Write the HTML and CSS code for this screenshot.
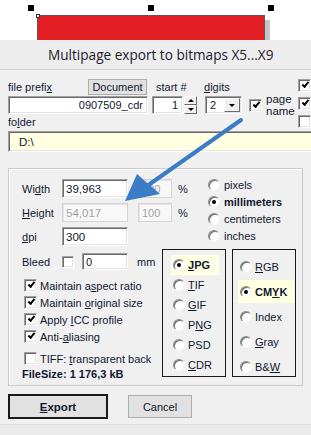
FILE: index.html
```html
<!DOCTYPE html>
<html lang="en">
<head>
  <meta charset="UTF-8" />
  <meta name="viewport" content="width=device-width, initial-scale=1.0"/>
  <title>Multipage export to bitmaps</title>
  <link rel="stylesheet" href="styles.css">
</head>
<body>
  <!-- drawing canvas behind the dialog -->
  <div class="canvas">
    <span class="handle h-left"></span>
    <span class="handle h-mid"></span>
    <span class="handle h-right"></span>
    <div class="shape"><span class="node"></span></div>
  </div>

  <div class="titlebar">Multipage export to bitmaps X5...X9</div>

  <div class="dialog">
    <div class="top">
      <div class="top-main">
        <div class="row labels">
          <span class="lbl-prefix">file prefi<u>x</u></span>
          <span class="btn btn-doc">Document</span>
          <span class="lbl-start">start #</span>
          <span><u>d</u>igits</span>
        </div>
        <div class="row inputs">
          <div class="field prefix">0907509_cdr</div>
          <div class="spin">
            <div class="field spin-val">1</div>
            <div class="spin-btns">
              <span class="arrow-btn"><i class="tri up"></i></span>
              <span class="arrow-btn"><i class="tri down"></i></span>
            </div>
          </div>
          <div class="field select">
            <span>2</span>
            <span class="arrow-btn drop"><i class="tri down"></i></span>
          </div>
          <div class="page-check">
            <span class="box checked"></span>
            <span class="page-lbl">page<br>name</span>
          </div>
        </div>
        <div class="lbl-folder">fo<u>l</u>der</div>
      </div>
      <div class="side-checks">
        <span class="box checked"></span>
        <span class="box checked"></span>
        <span class="box"></span>
      </div>
    </div>

    <div class="field folder">D:\</div>

    <div class="group">
      <div class="upper">
        <div class="sizes">
          <div class="size-row">
            <span class="lbl">Wi<u>d</u>th</span>
            <div class="field size">39,963</div>
            <div class="field pct disabled">100</div>
            <span class="pct-sign">%</span>
          </div>
          <div class="size-row">
            <span class="lbl"><u>H</u>eight</span>
            <div class="field size disabled">54,017</div>
            <div class="field pct disabled">100</div>
            <span class="pct-sign">%</span>
          </div>
          <div class="size-row">
            <span class="lbl"><u>d</u>pi</span>
            <div class="field size">300</div>
          </div>
        </div>
        <div class="units">
          <div class="opt"><span class="radio"></span><span>pixels</span></div>
          <div class="opt bold"><span class="radio on"></span><span>millimeters</span></div>
          <div class="opt"><span class="radio"></span><span>centimeters</span></div>
          <div class="opt"><span class="radio"></span><span>inches</span></div>
        </div>
      </div>

      <div class="lower">
        <div class="options">
          <div class="bleed-row">
            <span class="lbl">Bleed</span>
            <span class="box small"></span>
            <div class="field bleed">0</div>
            <span class="mm">mm</span>
          </div>
          <div class="checks">
            <div class="check"><span class="box checked"></span><span>Maintain a<u>s</u>pect ratio</span></div>
            <div class="check"><span class="box checked"></span><span>Maintain <u>o</u>riginal size</span></div>
            <div class="check"><span class="box checked"></span><span>Apply <u>I</u>CC profile</span></div>
            <div class="check"><span class="box checked"></span><span>Anti-<u>a</u>liasing</span></div>
            <div class="check tiff"><span class="box"></span><span>TIFF: <u>t</u>ransparent back</span></div>
          </div>
          <div class="filesize">FileSize: 1 176,3 kB</div>
        </div>

        <div class="pick formats">
          <div class="opt sel bold"><span class="radio on"></span><span><u>J</u>PG</span></div>
          <div class="opt"><span class="radio"></span><span><u>T</u>IF</span></div>
          <div class="opt"><span class="radio"></span><span><u>G</u>IF</span></div>
          <div class="opt"><span class="radio"></span><span>P<u>N</u>G</span></div>
          <div class="opt"><span class="radio"></span><span>PSD</span></div>
          <div class="opt"><span class="radio"></span><span><u>C</u>DR</span></div>
        </div>

        <div class="pick colors">
          <div class="opt"><span class="radio"></span><span><u>R</u>GB</span></div>
          <div class="opt sel bold"><span class="radio on"></span><span>CM<u>Y</u>K</span></div>
          <div class="opt"><span class="radio"></span><span>Index</span></div>
          <div class="opt"><span class="radio"></span><span><u>G</u>ray</span></div>
          <div class="opt"><span class="radio"></span><span>B&amp;<u>W</u></span></div>
        </div>
      </div>
    </div>

    <div class="buttons">
      <span class="btn btn-export"><span><u>E</u>xport</span></span>
      <span class="btn btn-cancel">Cancel</span>
    </div>
  </div>

  <div class="statusbar"></div>

  <!-- callout arrow drawn over the dialog -->
  <svg class="callout" width="311" height="435" viewBox="0 0 311 435">
    <line x1="241" y1="120" x2="147" y2="186" stroke="#3b7cc6" stroke-width="4" stroke-linecap="round"/>
    <polygon points="125,201 137,174 160,194" fill="#3b7cc6"/>
  </svg>
</body>
</html>
```

FILE: styles.css
```css
body {
  margin: 0;
  width: 311px;
  height: 435px;
  overflow: hidden;
  position: relative;
  background: #f0f0f0;
  font-family: "Liberation Sans", Arial, sans-serif;
  font-size: 11px;
  color: #101830;
}

u {
  text-decoration: underline;
  text-underline-offset: 1px;
}

/* Canvas with the selected red rectangle */
.canvas {
  position: relative;
  height: 40px;
  background: #fff;
  overflow: hidden;
}

.handle {
  position: absolute;
  top: 5px;
  width: 6px;
  height: 6px;
  background: #000;
}

.h-left { left: 28px; }
.h-mid { left: 148px; }
.h-right { left: 268px; }

.shape {
  position: absolute;
  left: 37px;
  top: 15px;
  width: 226px;
  height: 40px;
  background: #e31e24;
  border: 1px solid #5a5a5a;
  box-shadow: 5px 5px 0 #c4c4c4;
}

.node {
  position: absolute;
  left: -2px;
  top: -2px;
  width: 2px;
  height: 2px;
  background: #fff;
  border: 1px solid #333;
}

/* Title bar */
.titlebar {
  height: 30px;
  box-sizing: border-box;
  border-bottom: 1px solid #d6d6d6;
  background: #ededed;
  padding-left: 48px;
  line-height: 30px;
  font-family: "Open Sans", sans-serif;
  font-size: 13.6px;
  color: #1a1a2a;
  white-space: nowrap;
}

.dialog {
  padding-left: 8px;
}

/* Generic controls */
.field {
  box-sizing: border-box;
  background: #fff;
  border: 1px solid;
  border-color: #a0a0a0 #fff #fff #a0a0a0;
  box-shadow: inset 1px 1px #696969, inset -1px -1px #e3e3e3;
  padding: 0 4px;
  display: flex;
  align-items: center;
  white-space: nowrap;
  overflow: hidden;
}

.field.disabled {
  background: #f8f8f8;
  border-color: #d4d4d4;
  box-shadow: inset 1px 1px #e4e4e4;
  color: #a3a3a3;
}

.box {
  box-sizing: border-box;
  position: relative;
  flex: none;
  width: 13px;
  height: 13px;
  background: #fff;
  border: 1px solid;
  border-color: #a0a0a0 #fff #fff #a0a0a0;
  box-shadow: inset 1px 1px #696969, inset -1px -1px #e3e3e3;
}

.box.checked::after {
  content: "";
  position: absolute;
  left: 3px;
  top: 2px;
  width: 5px;
  height: 2px;
  border-left: 2px solid #000;
  border-bottom: 2px solid #000;
  transform: rotate(-50deg);
}

.radio {
  box-sizing: border-box;
  position: relative;
  flex: none;
  width: 12px;
  height: 12px;
  border-radius: 50%;
  background: #fff;
  border: 1px solid;
  border-color: #8a8a8a #f4f4f4 #f4f4f4 #8a8a8a;
  box-shadow: inset 1px 1px #6a6a6a;
}

.radio.on::after {
  content: "";
  position: absolute;
  left: 3px;
  top: 3px;
  width: 4px;
  height: 4px;
  border-radius: 50%;
  background: #000;
}

.btn {
  box-sizing: border-box;
  display: flex;
  align-items: center;
  justify-content: center;
  background: #e1e1e1;
  border: 1px solid #adadad;
}

.arrow-btn {
  box-sizing: border-box;
  display: flex;
  align-items: center;
  justify-content: center;
  background: #f0f0f0;
  border: 1px solid;
  border-color: #fff #6a6a6a #6a6a6a #fff;
}

.tri {
  width: 0;
  height: 0;
  border-left: 3px solid transparent;
  border-right: 3px solid transparent;
}

.tri.up { border-bottom: 3px solid #000; }
.tri.down { border-top: 3px solid #000; }

/* Top area */
.top {
  display: flex;
  margin-top: 8px;
}

.top-main {
  width: 293px;
}

.row {
  display: flex;
  align-items: center;
}

.labels {
  height: 17px;
}

.lbl-prefix {
  width: 80px;
}

.btn-doc {
  width: 59px;
  height: 16px;
  margin-top: 1px;
}

.lbl-start {
  width: 48px;
  margin-left: 9px;
}

.inputs {
  height: 18px;
  margin-top: 1px;
}

.prefix {
  width: 140px;
  height: 18px;
  justify-content: flex-end;
}

.spin {
  display: flex;
  margin-left: 4px;
}

.spin-val {
  width: 31px;
  height: 18px;
  justify-content: flex-end;
}

.spin-btns {
  display: flex;
  flex-direction: column;
  margin-left: 1px;
}

.spin-btns .arrow-btn {
  width: 13px;
  height: 9px;
}

.select {
  width: 37px;
  height: 18px;
  margin-left: 8px;
  padding: 0 1px 0 4px;
  justify-content: space-between;
}

.select .drop {
  width: 16px;
  height: 14px;
}

.page-check {
  display: flex;
  align-items: center;
  gap: 4px;
  margin-left: 7px;
}

.page-lbl {
  line-height: 12px;
  font-size: 11.5px;
}

.lbl-folder {
  margin-top: 1px;
  line-height: 15px;
}

.side-checks {
  display: flex;
  flex-direction: column;
  gap: 5px;
  margin-top: 1px;
}

.folder {
  width: 310px;
  height: 21px;
  margin-top: 1px;
  padding-left: 10px;
  background: #ffffe1;
  font-size: 11.5px;
}

/* Size group */
.group {
  box-sizing: border-box;
  width: 295px;
  height: 218px;
  margin-top: 16px;
  border: 1px solid #cbcbcb;
  box-shadow: inset 1px 1px #fff;
  padding: 10px 0 0 13px;
}

.upper {
  display: flex;
}

.sizes {
  width: 186px;
  display: flex;
  flex-direction: column;
  gap: 5px;
}

.size-row {
  display: flex;
  align-items: center;
  height: 19px;
}

.lbl {
  width: 40px;
}

.size {
  width: 66px;
  height: 19px;
  padding-left: 3px;
  font-size: 11.5px;
}

.pct {
  width: 34px;
  height: 19px;
  margin-left: 10px;
  padding-left: 3px;
}

.pct-sign {
  margin-left: 6px;
}

.units {
  margin-top: -3px;
}

.opt {
  display: flex;
  align-items: center;
  gap: 4px;
  height: 17px;
  white-space: nowrap;
}

.bold {
  font-weight: bold;
}

.lower {
  display: flex;
  margin-top: 3px;
}

.options {
  width: 140px;
}

.bleed-row {
  display: flex;
  align-items: center;
  height: 17px;
  margin-top: 4px;
}

.box.small {
  width: 12px;
  height: 12px;
}

.bleed {
  width: 46px;
  height: 17px;
  margin-left: 8px;
  padding-left: 3px;
}

.mm {
  margin-left: 9px;
}

.checks {
  margin-top: 7px;
}

.check {
  display: flex;
  align-items: center;
  gap: 3px;
  height: 17px;
  padding-left: 2px;
  white-space: nowrap;
}

.check.tiff {
  margin-top: 5px;
}

.filesize {
  font-weight: bold;
  line-height: 14px;
  white-space: nowrap;
}

.pick {
  box-sizing: border-box;
  width: 64px;
  height: 128px;
  border: 1px solid #1a1a1a;
  padding-top: 5px;
}

.formats .opt {
  width: 48px;
  height: 20px;
  margin-left: 8px;
  padding-left: 2px;
  gap: 3px;
  box-sizing: border-box;
}

.colors {
  margin-left: 6px;
}

.colors .opt {
  width: 56px;
  height: 23px;
  margin-left: 5px;
  margin-bottom: 2px;
  padding-left: 2px;
  gap: 3px;
  box-sizing: border-box;
}

.opt.sel {
  background: #ffffe1;
}

/* Dialog buttons */
.buttons {
  display: flex;
  align-items: center;
  margin-top: 8px;
  height: 25px;
}

.btn-export {
  width: 100px;
  height: 25px;
  border: 2px solid #1a1a1a;
  font-weight: bold;
  font-size: 11.5px;
}

.btn-cancel {
  width: 64px;
  height: 23px;
  margin-left: 20px;
}

.statusbar {
  margin-top: 5px;
  height: 20px;
  border-top: 1px solid #dedede;
  background: #ebebeb;
}

.callout {
  position: absolute;
  left: 0;
  top: 0;
  pointer-events: none;
}
```
